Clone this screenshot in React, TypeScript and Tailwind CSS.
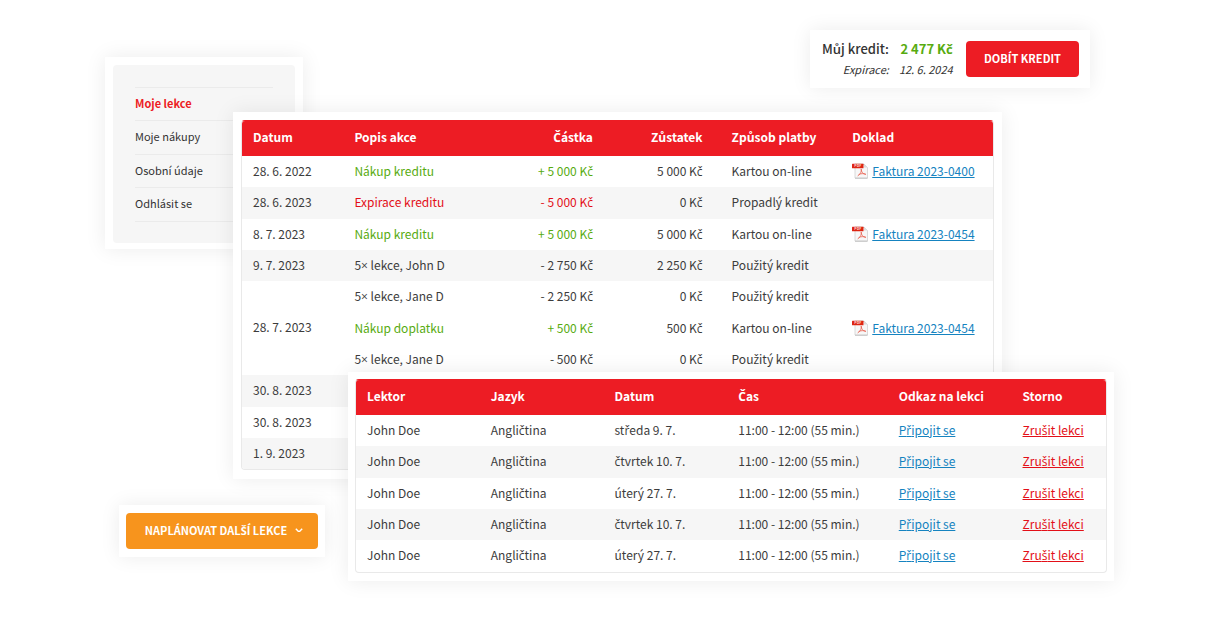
import type { ReactNode } from 'react';

type Tone = 'plain' | 'credit' | 'expired';

interface Transaction {
  date?: string;
  dateSpan?: number;
  action?: string;
  amount?: string;
  balance?: string;
  method?: string;
  invoice?: string;
  tone?: Tone;
  shaded?: boolean;
}

const transactions: Transaction[] = [
  { date: '28. 6. 2022', action: 'Nákup kreditu', amount: '+ 5 000 Kč', balance: '5 000 Kč', method: 'Kartou on-line', invoice: 'Faktura 2023-0400', tone: 'credit' },
  { date: '28. 6. 2023', action: 'Expirace kreditu', amount: '- 5 000 Kč', balance: '0 Kč', method: 'Propadlý kredit', tone: 'expired', shaded: true },
  { date: '8. 7. 2023', action: 'Nákup kreditu', amount: '+ 5 000 Kč', balance: '5 000 Kč', method: 'Kartou on-line', invoice: 'Faktura 2023-0454', tone: 'credit' },
  { date: '9. 7. 2023', action: '5× lekce, John D', amount: '- 2 750 Kč', balance: '2 250 Kč', method: 'Použitý kredit', shaded: true },
  { date: '28. 7. 2023', dateSpan: 3, action: '5× lekce, Jane D', amount: '- 2 250 Kč', balance: '0 Kč', method: 'Použitý kredit' },
  { action: 'Nákup doplatku', amount: '+ 500 Kč', balance: '500 Kč', method: 'Kartou on-line', invoice: 'Faktura 2023-0454', tone: 'credit' },
  { action: '5× lekce, Jane D', amount: '- 500 Kč', balance: '0 Kč', method: 'Použitý kredit' },
  { date: '30. 8. 2023', shaded: true },
  { date: '30. 8. 2023' },
  { date: '1. 9. 2023', shaded: true },
];

const lessonDates = ['středa 9. 7.', 'čtvrtek 10. 7.', 'úterý 27. 7.', 'čtvrtek 10. 7.', 'úterý 27. 7.'];

const menu = ['Moje lekce', 'Moje nákupy', 'Osobní údaje', 'Odhlásit se'];

const toneClass: Record<Tone, string> = {
  plain: '',
  credit: 'text-[#57ab10]',
  expired: 'text-[#e30f18]',
};

function Czech({ children = '', weight = '' }: { children?: string; weight?: string }) {
  return children.split(/([čřžšůČŠ×]+)/).map((part, i) =>
    i % 2 ? (
      <span key={i} className={`font-['Open_Sans',sans-serif] leading-none ${weight}`}>
        {part}
      </span>
    ) : (
      part
    ),
  );
}

function Card({ className, children }: { className: string; children: ReactNode }) {
  return (
    <section className={`col-start-1 row-start-1 self-start bg-white shadow-[0_0_20px_rgba(0,0,0,0.08)] ${className}`}>
      {children}
    </section>
  );
}

function PdfIcon() {
  return (
    <svg viewBox="0 0 32 32" className="size-4 shrink-0" aria-hidden="true">
      <path d="M6 2h18l7 7v21H6z" fill="#f7f7f7" stroke="#cfcfcf" strokeWidth="1.5" />
      <path d="M6 30.5h25" stroke="#b5b5b5" strokeWidth="1.5" />
      <path d="M24 2v7h7z" fill="#dcdcdc" />
      <rect x="0" y="1.5" width="23" height="9" rx="1" fill="#dd2412" />
      <text x="11.5" y="8.6" fontSize="7" fontWeight="700" textAnchor="middle" fill="#fbd9d5">PDF</text>
      <path
        d="M18.5 13c1 4-1.5 9.5-6.5 12.5M18.5 13c0 5 3 9 8.5 9.5M14 22.8c4-1.8 9-2.3 13-.3"
        fill="none"
        stroke="#e8604f"
        strokeWidth="1.6"
        strokeLinecap="round"
      />
    </svg>
  );
}

function DataTable({ widths, head, children }: { widths: string[]; head: ReactNode; children: ReactNode }) {
  return (
    <div className="overflow-hidden rounded border border-[#e9e9e9] border-t-[#ed1c24]">
      <table className="w-full table-fixed text-left text-xs leading-5 text-[#3c3c3c]">
        <colgroup>
          {widths.map((w, i) => (
            <col key={i} className={w} />
          ))}
        </colgroup>
        <thead className="bg-[#ed1c24] text-white">
          <tr className="h-[35px]">{head}</tr>
        </thead>
        <tbody>{children}</tbody>
      </table>
    </div>
  );
}

const th = 'px-[11px] pb-1 font-bold whitespace-nowrap';
const td = 'px-[11px] pb-0.5 whitespace-nowrap';

export default function App() {
  return (
    <main className="mx-auto grid min-h-screen w-full max-w-[1220px] bg-white pb-10 font-['Noto_Sans_CJK_SC','Open_Sans',sans-serif] text-[#333]">
      <Card className="mt-[57px] ml-[105px] w-[198px] px-2 pt-2 pb-1.5">
        <nav className="rounded bg-[#f6f6f6] px-[22px] pt-[22px] pb-[21px]">
          <ul className="border-t border-[#ebebeb] text-[11px] leading-[30px]">
            {menu.map((item, i) => (
              <li key={item} className="border-b border-[#ebebeb] pb-0.5 even:pb-[3px]">
                <a href="#" className={i === 0 ? 'font-bold text-[#ed1c24]' : ''}>
                  {item}
                </a>
              </li>
            ))}
          </ul>
        </nav>
      </Card>

      <Card className="mt-[30px] mr-[130px] flex w-[280px] items-center justify-between justify-self-end py-[11px] pr-[11px] pl-3">
        <dl className="grid grid-cols-[auto_auto] gap-x-2.5 gap-y-1 text-right leading-4 whitespace-nowrap">
          <dt className="text-[13px] font-medium">
            <Czech weight="font-semibold">Můj kredit:</Czech>
          </dt>
          <dd className="text-[13px] font-bold text-[#57ab10]">
            <Czech>2 477 Kč</Czech>
          </dd>
          <dt className="text-[11px] italic">Expirace:</dt>
          <dd className="text-[11px] italic">12. 6. 2024</dd>
        </dl>
        <button type="button" className="h-9 rounded bg-[#ed1c24] px-[18px] pb-0.5 text-[11px] font-bold whitespace-nowrap text-white">
          DOBÍT KREDIT
        </button>
      </Card>

      <Card className="mt-[112px] mr-[218px] ml-[233px] px-2 pt-2 pb-[9px]">
        <DataTable
          widths={['w-[13.5%]', 'w-[20%]', 'w-[14.7%]', 'w-[14.6%]', 'w-[17%]', 'w-[20.2%]']}
          head={
            <>
              <th className={th}>Datum</th>
              <th className={th}>Popis akce</th>
              <th className={`${th} text-right`}>
                <Czech>Částka</Czech>
              </th>
              <th className={`${th} text-right`}>
                <Czech>Zůstatek</Czech>
              </th>
              <th className={`${th} pl-[18px]`}>
                <Czech>Způsob platby</Czech>
              </th>
              <th className={th}>Doklad</th>
            </>
          }
        >
          {transactions.map((t, i) => (
            <tr key={i} className={`h-[31px] nth-[3n+2]:h-8 ${t.shaded ? 'bg-[#f6f6f6]' : 'bg-white'}`}>
              {t.date && (
                <td className={td} rowSpan={t.dateSpan}>
                  {t.date}
                </td>
              )}
              <td className={`${td} ${toneClass[t.tone ?? 'plain']}`}>
                <Czech>{t.action}</Czech>
              </td>
              <td className={`${td} text-right ${toneClass[t.tone ?? 'plain']}`}>
                <Czech>{t.amount}</Czech>
              </td>
              <td className={`${td} text-right`}>
                <Czech>{t.balance}</Czech>
              </td>
              <td className={`${td} pl-[18px]`}>
                <Czech>{t.method}</Czech>
              </td>
              <td className={td}>
                {t.invoice && (
                  <a href="#" className="flex items-center gap-1 text-[#1583c0]">
                    <PdfIcon />
                    <span className="underline">{t.invoice}</span>
                  </a>
                )}
              </td>
            </tr>
          ))}
        </DataTable>
      </Card>

      <Card className="mt-[372px] mr-[106px] ml-[348px] px-[7px] pt-[7px] pb-2">
        <DataTable
          widths={['w-[16.5%]', 'w-[16.5%]', 'w-[16.5%]', 'w-[21.4%]', 'w-[16.5%]', 'w-[12.6%]']}
          head={
            <>
              <th className={th}>Lektor</th>
              <th className={th}>Jazyk</th>
              <th className={th}>Datum</th>
              <th className={th}>
                <Czech>Čas</Czech>
              </th>
              <th className={th}>Odkaz na lekci</th>
              <th className={th}>Storno</th>
            </>
          }
        >
          {lessonDates.map((date, i) => (
            <tr key={i} className="h-[31px] nth-[3n+2]:h-8 even:bg-[#f6f6f6]">
              <td className={td}>John Doe</td>
              <td className={td}>
                <Czech>Angličtina</Czech>
              </td>
              <td className={td}>
                <Czech>{date}</Czech>
              </td>
              <td className={td}>11:00 - 12:00 (55 min.)</td>
              <td className={td}>
                <a href="#" className="text-[#1583c0] underline">
                  <Czech>Připojit se</Czech>
                </a>
              </td>
              <td className={td}>
                <a href="#" className="text-[#e30f18] underline">
                  <Czech>Zrušit lekci</Czech>
                </a>
              </td>
            </tr>
          ))}
        </DataTable>
      </Card>

      <Card className="mt-[505px] ml-[119px] w-[206px] px-[7px] py-2">
        <button
          type="button"
          className="flex h-9 w-full items-center justify-center gap-2 rounded bg-[#f7941d] pb-0.5 pl-1 text-[11px] font-bold whitespace-nowrap text-white"
        >
          <span>
            <Czech>NAPLÁNOVAT DALŠÍ LEKCE</Czech>
          </span>
          <svg viewBox="0 0 10 6" className="w-2" fill="none" stroke="currentColor" strokeWidth="1.8" aria-hidden="true">
            <path d="M1 1l4 4 4-4" />
          </svg>
        </button>
      </Card>
    </main>
  );
}
